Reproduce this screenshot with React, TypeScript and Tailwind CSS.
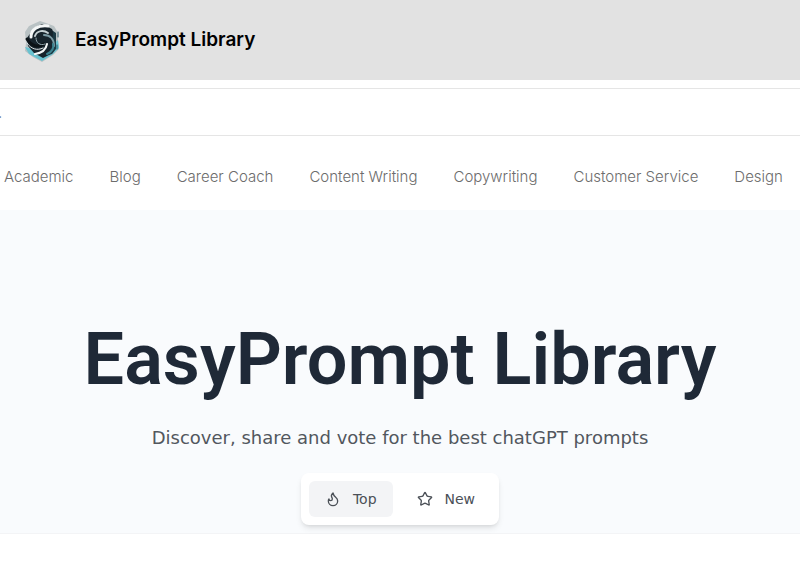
import { useState } from "react";
import { Star } from "lucide-react";

const categories = [
  "Academic",
  "Blog",
  "Career Coach",
  "Content Writing",
  "Copywriting",
  "Customer Service",
  "Design",
];

const Logo = () => (
  <svg viewBox="0 0 44 46" className="h-[46px] w-11" aria-hidden="true">
    <path d="M20 4l6 2 8 3 3 5 2 18-6 6-11 7-9-5-8-6 1-8-1-11 4-6z" fill="#b9c2c4" />
    <path d="M5 30l4 7 13 7 11-7 6-6-1-8-13 12z" fill="#69c2d0" />
    <path d="M14 11l8-4 10 5 3 7 1 12-5 6-8 4-9-5-6-7-1-8z" fill="#17242c" />
    <path d="M33 14l3 2v16l-4 5-6 1 6-8z" fill="#1c3943" />
    <g fill="none" strokeLinecap="round">
      <path d="M11 20c0-8 7-12 17-11" stroke="#f4f7f7" strokeWidth="3" />
      <path d="M15 19c2-6 9-6 13-3" stroke="#c6d1d4" strokeWidth="2" />
      <path d="M7 22c4 7 11 9 17 5" stroke="#0b1216" strokeWidth="3" />
      <path d="M7 26c4 6 10 8 16 5" stroke="#dfe6e8" strokeWidth="1" />
      <path d="M15 37c7-1 11-4 12-10" stroke="#f4f7f7" strokeWidth="2" />
      <path d="M24 18c6 0 10 4 10 11" stroke="#7c9ba4" strokeWidth="2" />
      <path d="M16 21c0 5 4 8 9 6" stroke="#93a9b0" strokeWidth="1" />
      <path d="M27 37c5-2 7-6 6-10" stroke="#3d8491" strokeWidth="2" />
      <path d="M38 15v5M37 28v4" stroke="#2c5964" strokeWidth="1" />
    </g>
  </svg>
);

const FlameIcon = () => (
  <svg
    viewBox="0 0 24 24"
    className="size-4"
    fill="none"
    stroke="currentColor"
    strokeWidth="2"
    strokeLinecap="round"
    strokeLinejoin="round"
    aria-hidden="true"
  >
    <path d="M8.5 14.5A2.5 2.5 0 0 0 11 12c0-1.38-.5-2-1-3-1.072-2.143-.224-4.054 2-6 .5 2.5 2 4.9 4 6.5 2 1.6 3 3.5 3 5.5a7 7 0 1 1-14 0c0-1.153.433-2.294 1-3a2.5 2.5 0 0 0 2.5 2.5z" />
  </svg>
);

export default function App() {
  const [sort, setSort] = useState("top");

  return (
    <div className="min-h-screen overflow-x-hidden bg-white font-['Inter',sans-serif]">
      {/* Header */}
      <header className="flex h-20 items-center bg-[#e2e2e2] px-5">
        <a
          href="#"
          className="flex items-center gap-[11px] text-[19px] leading-8 font-semibold text-black"
        >
          <Logo />
          EasyPrompt Library
        </a>
      </header>

      {/* Search */}
      <div className="mt-2 overflow-hidden border-y border-[#e5e5e5]">
        <input
          type="search"
          aria-label="Search prompts"
          placeholder="."
          className="-ml-0.5 block h-[46px] w-full bg-transparent text-sm outline-none placeholder:text-gray-500"
        />
      </div>

      {/* Categories */}
      <nav className="flex h-[74px] items-center gap-9 overflow-hidden pt-2 pl-1 text-[15px] whitespace-nowrap">
        {categories.map((category) => (
          <a key={category} href="#" className="font-light text-[#6c6c6c]">
            {category}
          </a>
        ))}
      </nav>

      {/* Hero */}
      <main className="flex flex-col items-center border-b border-gray-100 bg-[#f9fbfd] pt-28 pb-2">
        <h1 className="text-center font-['Roboto',sans-serif] text-[72px] leading-[76px] font-semibold text-[#1f2937]">
          EasyPrompt Library
        </h1>
        <p className="mt-[26px] text-center font-['DejaVu_Sans',sans-serif] text-lg text-[#52575e]">
          Discover, share and vote for the best chatGPT prompts
        </p>
        <div className="mt-[21px] flex gap-2 rounded-lg bg-white p-2 font-['DejaVu_Sans',sans-serif] text-sm text-[#4b5057] shadow-md">
          <button
            type="button"
            onClick={() => setSort("top")}
            className={`flex h-9 items-center gap-3 rounded-md px-4 ${sort === "top" ? "bg-gray-100" : ""}`}
          >
            <FlameIcon />
            Top
          </button>
          <button
            type="button"
            onClick={() => setSort("new")}
            className={`flex h-9 items-center gap-3 rounded-md px-4 ${sort === "new" ? "bg-gray-100" : ""}`}
          >
            <Star className="size-4" aria-hidden="true" />
            New
          </button>
        </div>
      </main>
    </div>
  );
}
